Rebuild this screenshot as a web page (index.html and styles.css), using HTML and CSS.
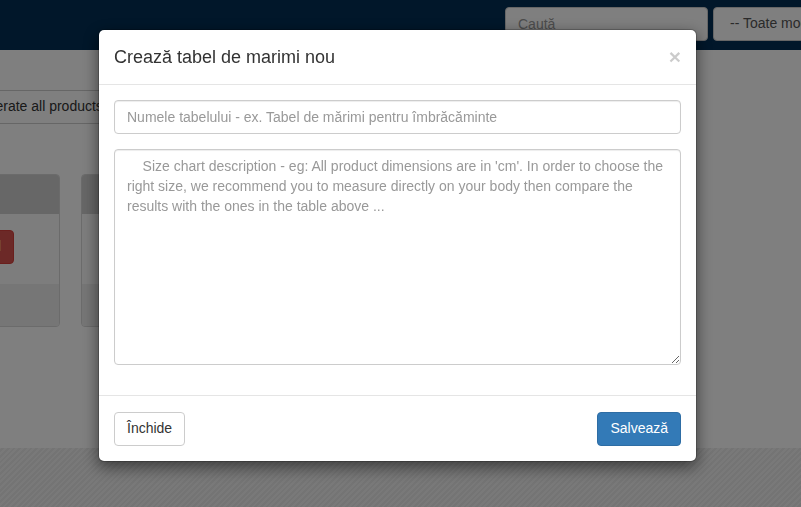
FILE: index.html
```html
<!DOCTYPE html>
<html lang="ro">
<head>
    <meta charset="UTF-8">
    <title>Tabele de marimi</title>
    <link rel="stylesheet" href="styles.css">
</head>
<body>
    <header class="navbar">
        <div class="nav-tools">
            <input class="nav-search" type="text" placeholder="Caută">
            <div class="nav-select">-- Toate modelele</div>
        </div>
    </header>

    <main class="page">
        <div class="toolbar">
            <button class="btn btn-default">Generate all products</button>
        </div>
        <div class="cards">
            <div class="card">
                <div class="card-head"></div>
                <div class="card-body">
                    <button class="btn btn-danger">Șterge tabel</button>
                </div>
                <div class="card-foot"></div>
            </div>
            <div class="card">
                <div class="card-head"></div>
                <div class="card-body"></div>
                <div class="card-foot"></div>
            </div>
        </div>
    </main>

    <div class="backdrop"></div>

    <!-- modal: tabel nou -->
    <div class="modal">
        <div class="modal-dialog">
            <div class="modal-header">
                <h4 class="modal-title">Crează tabel de marimi nou</h4>
                <button class="close" type="button">&times;</button>
            </div>
            <div class="modal-body">
                <div class="form-group">
                    <input class="form-control" type="text" placeholder="Numele tabelului - ex. Tabel de mărimi pentru îmbrăcăminte">
                </div>
                <div class="form-group">
                    <textarea class="form-control chart-desc" placeholder="    Size chart description - eg: All product dimensions are in 'cm'. In order to choose the right size, we recommend you to measure directly on your body then compare the results with the ones in the table above ..."></textarea>
                </div>
            </div>
            <div class="modal-footer">
                <button class="btn btn-default" type="button">Închide</button>
                <button class="btn btn-primary" type="button">Salvează</button>
            </div>
        </div>
    </div>
</body>
</html>
```

FILE: styles.css
```css
* {
    box-sizing: border-box;
}
html, body {
    margin: 0;
    height: 100%;
    overflow: hidden;
}
body {
    font-family: "Liberation Sans", Arial, sans-serif;
    font-size: 14px;
    line-height: 1.42857;
    color: #333;
    background: repeating-linear-gradient(135deg, #f2f2f2 0 2px, #e8e8e8 2px 4px);
}

/* page behind the modal */
.navbar {
    height: 50px;
    background: #022e54;
    padding-top: 7px;
}
.nav-tools {
    display: flex;
    gap: 5px;
    margin-left: 505px;
}
.nav-search,
.nav-select {
    height: 34px;
    padding: 6px 12px;
    border: 1px solid #ccc;
    border-radius: 4px;
    background: #fff;
    font: inherit;
    color: #555;
}
.nav-search {
    width: 203px;
}
.nav-search::placeholder {
    color: #999;
}
.nav-select {
    width: 150px;
    flex-shrink: 0;
    padding-left: 16px;
    white-space: nowrap;
}
.page {
    height: 398px;
    padding-top: 40px;
    background: #fff;
}
.toolbar {
    margin-left: -44px;
}
.cards {
    display: flex;
    gap: 21px;
    margin-top: 50px;
    margin-left: -140px;
}
.card {
    width: 200px;
    flex-shrink: 0;
    border: 1px solid #d6d6d6;
    border-radius: 4px;
    background: #fafafa;
    overflow: hidden;
}
.card-head {
    height: 39px;
    background: #cecece;
}
.card-body {
    height: 70px;
    padding: 16px 15px;
}
.card-foot {
    height: 42px;
    background: #ececec;
}

/* buttons & inputs */
.btn {
    height: 34px;
    padding: 6px 12px;
    border: 1px solid transparent;
    border-radius: 4px;
    font: inherit;
    white-space: nowrap;
    cursor: pointer;
}
.btn-default {
    background: #fff;
    border-color: #ccc;
    color: #333;
}
.btn-primary {
    background: #337ab7;
    border-color: #2e6da4;
    color: #fff;
}
.btn-danger {
    width: 138px;
    background: #d9534f;
    border-color: #d43f3a;
    color: #fff;
    text-align: right;
}
.form-group {
    margin-bottom: 15px;
}
.form-control {
    display: block;
    width: 100%;
    height: 34px;
    padding: 6px 12px;
    border: 1px solid #ccc;
    border-radius: 4px;
    background: #fff;
    font: inherit;
    color: #555;
    box-shadow: inset 0 1px 1px rgba(0, 0, 0, .075);
}
.form-control::placeholder {
    color: #999;
}
.chart-desc {
    height: 216px;
    resize: vertical;
    line-height: 20px;
}

/* modal */
.backdrop {
    position: fixed;
    inset: 0;
    background: rgba(0, 0, 0, .5);
}
.modal {
    position: fixed;
    inset: 0;
}
.modal-dialog {
    width: 599px;
    margin: 29px 0 0 98px;
    background: #fff;
    background-clip: padding-box;
    border: 1px solid rgba(0, 0, 0, .2);
    border-radius: 6px;
    box-shadow: 0 5px 15px rgba(0, 0, 0, .5);
}
.modal-header {
    display: flex;
    justify-content: space-between;
    align-items: center;
    padding: 15px;
    border-bottom: 1px solid #e5e5e5;
}
.modal-title {
    margin: 0;
    font-size: 18px;
    font-weight: 500;
    line-height: 24px;
}
.close {
    padding: 0;
    border: 0;
    background: none;
    font-family: inherit;
    font-size: 21px;
    font-weight: bold;
    line-height: 1;
    color: #000;
    opacity: .2;
    margin-top: -2px;
}
.modal-body {
    padding: 15px;
}
.modal-footer {
    display: flex;
    justify-content: space-between;
    padding: 16px 15px 15px;
    border-top: 1px solid #e5e5e5;
}
```
